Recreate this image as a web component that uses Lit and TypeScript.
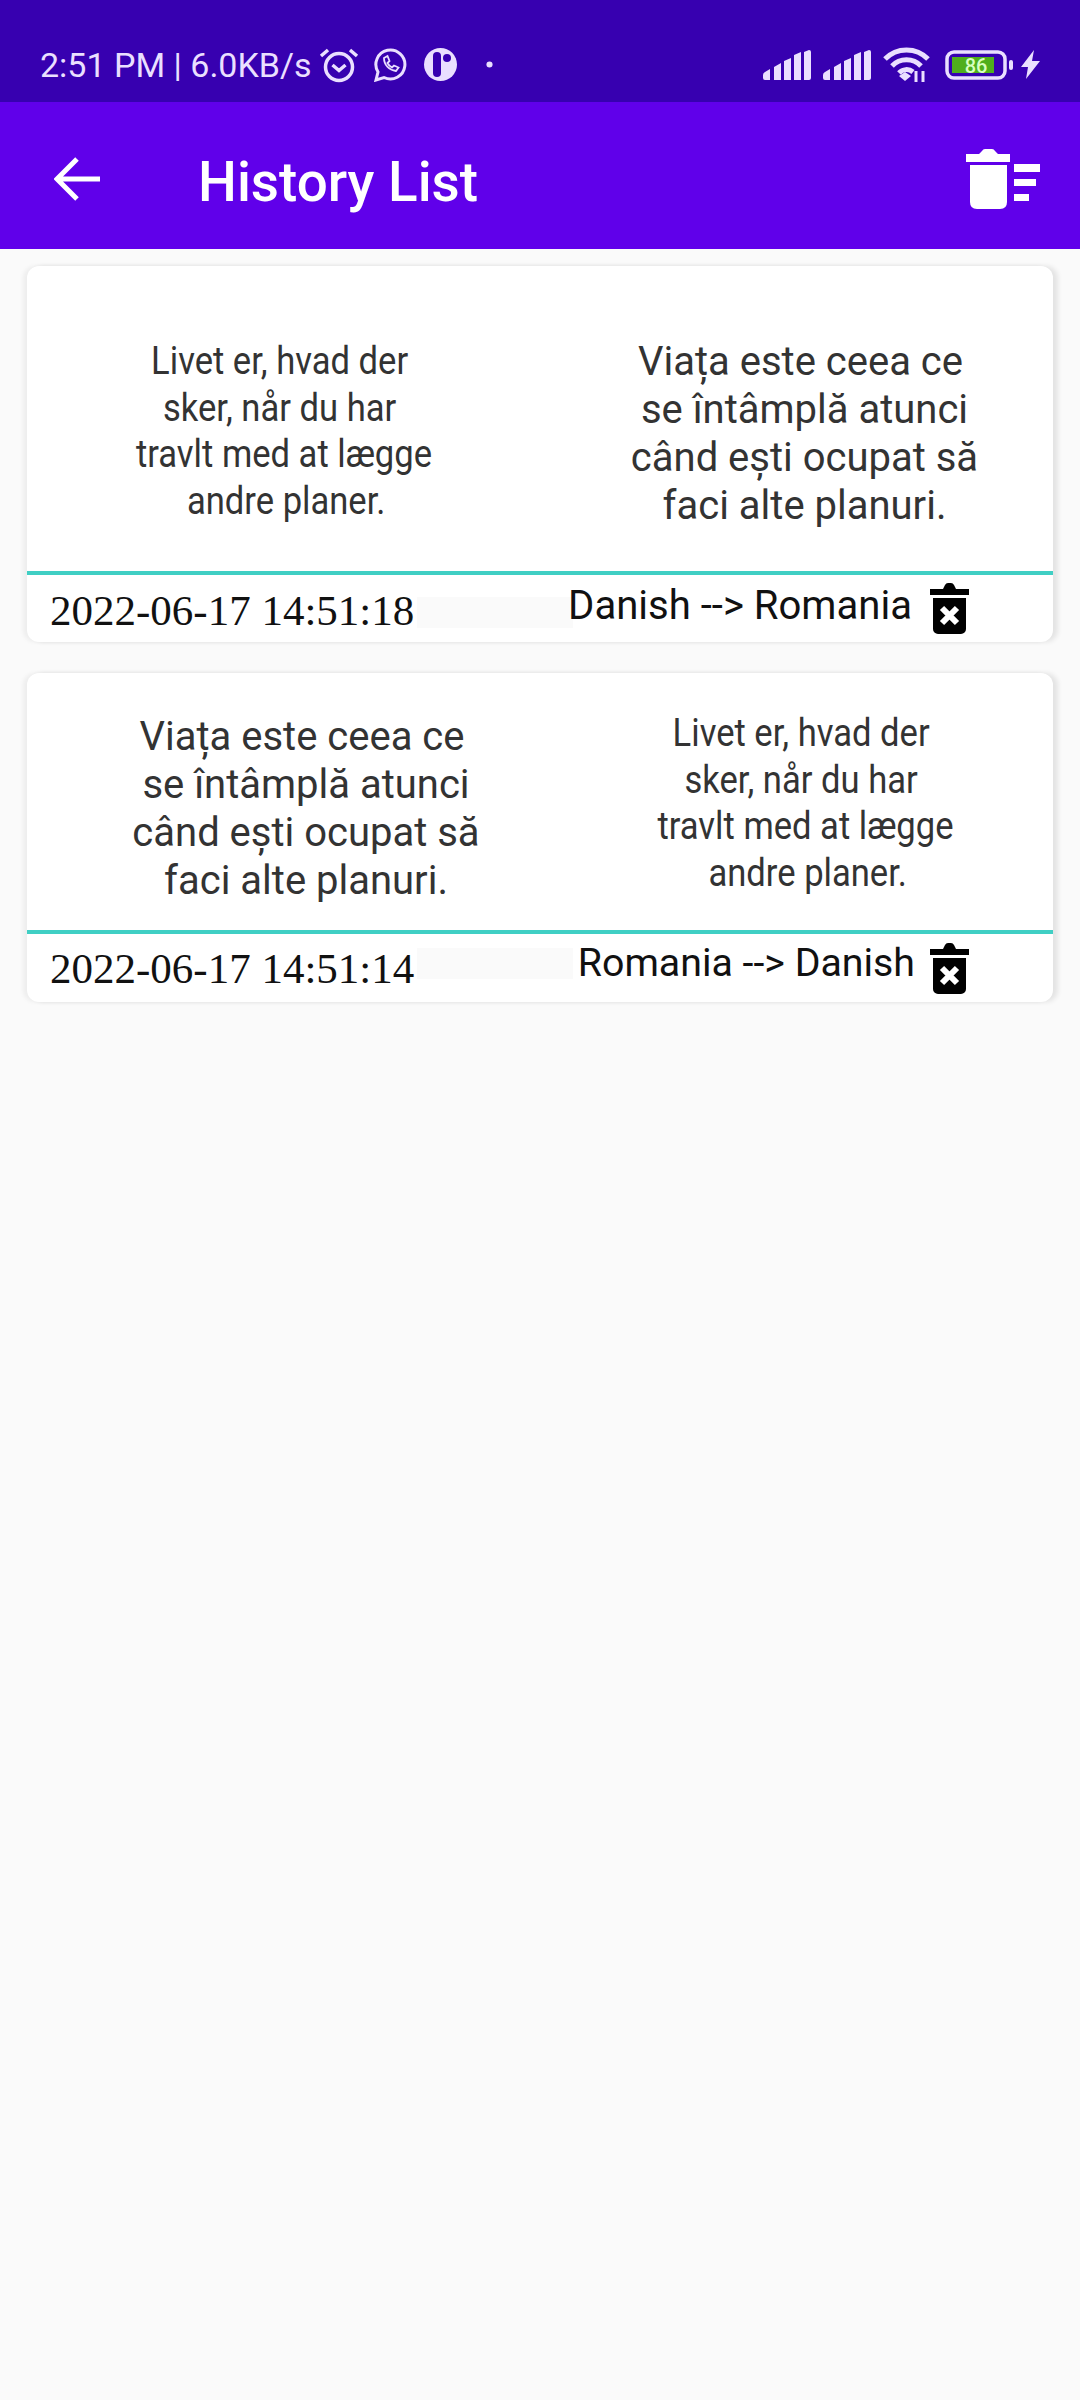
import { LitElement, css, html } from 'lit';
import { customElement } from 'lit/decorators.js';

interface HistoryItem {
  left: string[];
  right: string[];
  leftClass: string;
  rightClass: string;
  date: string;
  langs: string;
}

const DANISH = ['Livet er, hvad der', 'sker, når du har', 'travlt med at lægge', 'andre planer.'];
const ROMANIAN = ['Viața este ceea ce', 'se întâmplă atunci', 'când ești ocupat să', 'faci alte planuri.'];

const ITEMS: HistoryItem[] = [
  { left: DANISH, right: ROMANIAN, leftClass: 'da', rightClass: 'ro', date: '2022-06-17 14:51:18', langs: 'Danish --> Romania' },
  { left: ROMANIAN, right: DANISH, leftClass: 'ro', rightClass: 'da', date: '2022-06-17 14:51:14', langs: 'Romania --> Danish' },
];

const binIcon = html`<svg class="bin" viewBox="0 0 39 51">
  <path fill="#000" d="M0 6h13l2-4q1-2 3-2h3q2 0 3 2l2 4h13v6H0zM3 15h33v31a5 5 0 0 1-5 5H8a5 5 0 0 1-5-5z" />
  <path stroke="#fff" stroke-width="6" d="M12 25l15 15M27 25L12 40" fill="none" />
</svg>`;

const signalIcon = html`<svg width="48" height="30" viewBox="0 0 48 30" fill="#eadfff">
  <path d="M0 25q0-2 2-3l5-3v11H2q-2 0-2-2zM11 17l7-4v17h-7zM21 11l7-3v22h-7zM31 5l7-3v28h-7zM41 2l5-2q2 0 2 2v26q0 2-2 2h-5z" />
</svg>`;

@customElement('app-root')
export class AppRoot extends LitElement {
  static styles = css`
    :host {
      display: block;
      width: 1080px;
      height: 2400px;
      background: #fafafa;
      font-family: Roboto, sans-serif;
    }
    .status {
      height: 102px;
      box-sizing: border-box;
      padding: 27px 40px 0 40px;
      background: #3700b0;
      color: #eadfff;
      display: flex;
      align-items: center;
      font-size: 34px;
    }
    .status .time {
      margin-right: 7px;
    }
    .status svg {
      display: block;
      flex: none;
    }
    .ml-wa {
      margin-left: 15px;
    }
    .ml-app {
      margin-left: 17px;
    }
    .ml-dot {
      margin-left: 29px;
    }
    .ml-12 {
      margin-left: 12px;
    }
    .ml-15 {
      margin-left: 15px;
    }
    .ml-8 {
      margin-left: 8px;
    }
    .spacer {
      flex: 1;
    }
    .bar {
      height: 147px;
      box-sizing: border-box;
      background: #6000ea;
      color: #fff;
      display: flex;
      align-items: center;
      padding: 7px 40px 0 54px;
    }
    .bar h1 {
      margin: 5px 0 0 98px;
      font-size: 54.8px;
      font-weight: 500;
      flex: 1;
    }
    .list {
      padding: 17px 27px 0 27px;
      display: flex;
      flex-direction: column;
      gap: 31px;
    }
    .card {
      background: #fff;
      border-radius: 12px;
      box-shadow: 5px 0 5px rgba(0, 0, 0, 0.09), -4px 0 4px rgba(0, 0, 0, 0.05);
      overflow: hidden;
    }
    .texts {
      display: grid;
      grid-template-columns: 1fr 1fr;
      align-items: start;
      color: #333;
      text-align: center;
      border-bottom: 4px solid #40cfc4;
    }
    .one .texts {
      height: 305px;
    }
    .two .texts {
      height: 257px;
    }
    .tx div {
      white-space: nowrap;
    }
    .da {
      font-size: 39.5px;
      line-height: 46.7px;
    }
    .da div {
      transform: scaleX(0.875);
    }
    /* the wrapped lines are not quite centred on the same axis */
    .da div:nth-child(1),
    .da div:nth-child(2) {
      padding-right: 10px;
    }
    .da div:nth-child(4) {
      padding-left: 5px;
    }
    .ro {
      font-size: 40px;
      line-height: 48px;
    }
    .ro div:nth-child(1) {
      padding-right: 8px;
    }
    .one .tx:nth-child(1) {
      margin-top: 72px;
      padding-left: 1px;
    }
    .one .tx:nth-child(2) {
      margin-top: 72px;
      padding-left: 16px;
    }
    .two .tx:nth-child(1) {
      margin-top: 40px;
      padding-left: 45px;
    }
    .two .tx:nth-child(2) {
      margin-top: 37px;
      padding-left: 18px;
    }
    .foot {
      display: flex;
      align-items: center;
      padding-left: 23px;
      color: #111;
    }
    .one .foot {
      height: 67px;
    }
    .two .foot {
      height: 68px;
    }
    .date {
      font-family: 'Liberation Serif', serif;
      font-size: 43px;
      width: 367px;
      flex: none;
    }
    .one .date {
      padding-top: 3px;
    }
    .langs {
      flex: 1;
      align-self: flex-start;
      text-align: right;
      white-space: nowrap;
      line-height: 44px;
      background-image: linear-gradient(#fafafa, #fafafa);
      background-repeat: no-repeat;
      background-size: 156px 31px;
    }
    .one .langs {
      font-size: 40.1px;
      margin-top: 9px;
      background-position: 0 13px;
    }
    .two .langs {
      font-size: 39.3px;
      margin-top: 7px;
      margin-right: -3px;
      background-position: 0 7px;
    }
    .bin {
      width: 39px;
      height: 51px;
      margin: 0 84px 0 18px;
      flex: none;
    }
  `;

  private _renderItem(item: HistoryItem, idx: number) {
    return html`<section class="card ${idx === 0 ? 'one' : 'two'}">
      <div class="texts">
        <div class="tx ${item.leftClass}">${item.left.map((l) => html`<div>${l}</div>`)}</div>
        <div class="tx ${item.rightClass}">${item.right.map((l) => html`<div>${l}</div>`)}</div>
      </div>
      <div class="foot">
        <span class="date">${item.date}</span>
        <span class="langs">${item.langs}</span>
        ${binIcon}
      </div>
    </section>`;
  }

  render() {
    return html`
      <div class="status">
        <span class="time">2:51 PM | 6.0KB/s</span>
        <svg width="40" height="36" viewBox="0 0 40 36" fill="none" stroke="#eadfff" stroke-width="3.5">
          <circle cx="20" cy="20" r="13.5" />
          <path d="M13.5 18l6.5 5.500 6.500-5.500M2 9l7-6M38 9l-7-6" />
        </svg>
        <svg class="ml-wa" width="33" height="34" viewBox="0 0 33 34" fill="none" stroke="#eadfff" stroke-width="3">
          <path d="M2 32l2-8a14.500 14.500 0 1 1 6 5.500z" />
          <path d="M10 10c0 7 5 12 12 13l2.500-3.500-4.500-2-2 2c-2-1-3.500-2.500-4.500-4.500l2-2-2-5z" stroke-width="1.800" />
        </svg>
        <svg class="ml-app" width="33" height="33" viewBox="0 0 33 33">
          <circle cx="16.500" cy="16.500" r="16.500" fill="#eadfff" />
          <rect x="9" y="4" width="8" height="25" rx="4" fill="#3700b0" />
          <circle cx="23" cy="10" r="4" fill="#3700b0" />
        </svg>
        <svg class="ml-dot" width="7" height="7" viewBox="0 0 8 8"><circle cx="4" cy="4" r="3.500" fill="#eadfff" /></svg>
        <span class="spacer"></span>
        ${signalIcon}
        <span class="ml-12">${signalIcon}</span>
        <svg class="ml-12" width="47" height="36" viewBox="0 0 47 36" fill="none" stroke="#eadfff" stroke-width="5">
          <path d="M2 12a30 30 0 0 1 43 0M9 19a20 20 0 0 1 29 0M16 26a10 10 0 0 1 14-1" />
          <path d="M16 29l6-4 6 4-6 5z" fill="#eadfff" stroke="none" />
          <path d="M33 24v11M40 24v11" stroke-width="3" />
        </svg>
        <svg class="ml-15" width="68" height="30" viewBox="0 0 68 30">
          <rect x="2" y="2" width="58" height="26" rx="7" fill="none" stroke="#eadfff" stroke-width="3.500" />
          <rect x="7" y="7" width="42" height="16" fill="#4fae1c" />
          <rect x="64" y="10" width="4" height="10" rx="2" fill="#eadfff" />
          <text x="31" y="22.500" text-anchor="middle" font-family="Roboto" font-size="20" font-weight="500" fill="#d8ffc0">86</text>
        </svg>
        <svg class="ml-8" width="19" height="29" viewBox="0 0 19 29" fill="#eadfff">
          <path d="M13 0L0 17h7L5 29 19 11h-8z" />
        </svg>
      </div>
      <header class="bar">
        <svg width="46" height="46" viewBox="0 0 46 46" fill="none" stroke="#fff" stroke-width="5">
          <path d="M46 23H4M23 3L3 23l20 20" />
        </svg>
        <h1>History List</h1>
        <svg width="74" height="60" viewBox="0 0 74 60" fill="#fff">
          <path d="M0 5h13l3-3q1-2 3-2h7q2 0 3 2l3 3h12v8H0zM4 16h37v37q0 7-7 7H11q-7 0-7-7z" />
          <path d="M48 15h26v8H48zM48 30h22v7H48zM48 45h15v7H48z" />
        </svg>
      </header>
      <main class="list">${ITEMS.map((it, i) => this._renderItem(it, i))}</main>
    `;
  }
}

declare global {
  interface HTMLElementTagNameMap {
    'app-root': AppRoot;
  }
}
